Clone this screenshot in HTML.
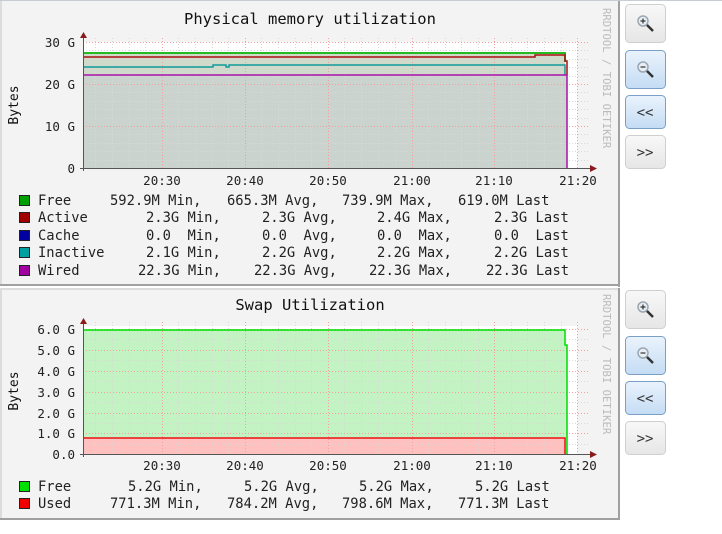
<!DOCTYPE html>
<html><head><meta charset="utf-8"><style>
html,body{margin:0;padding:0;background:#fff;width:722px;height:534px;overflow:hidden}
svg{display:block}
text{font-family:"DejaVu Sans Mono","Liberation Mono",monospace;white-space:pre}
</style></head><body>
<svg width="722" height="534" xmlns="http://www.w3.org/2000/svg">
<defs>
<linearGradient id="gb" x1="0" y1="0" x2="0" y2="1"><stop offset="0" stop-color="#f8f8f8"/><stop offset="1" stop-color="#e6e6e6"/></linearGradient>
<linearGradient id="bb" x1="0" y1="0" x2="0" y2="1"><stop offset="0" stop-color="#eaf3fc"/><stop offset="1" stop-color="#c4dcf4"/></linearGradient>
<g id="zin"><circle cx="-2" cy="-3" r="5" fill="#e8eef3" stroke="#9aa7b2" stroke-width="1.5"/><path d="M2 1 L8 7" stroke="#333" stroke-width="2.5"/><path d="M-4.5 -3 H0.5 M-2 -5.5 V-0.5" stroke="#333" stroke-width="1.2"/></g>
<g id="zout"><circle cx="-2" cy="-3" r="5" fill="#e8eef3" stroke="#9aa7b2" stroke-width="1.5"/><path d="M2 1 L8 7" stroke="#333" stroke-width="2.5"/><path d="M-4.5 -3 H0.5" stroke="#333" stroke-width="1.2"/></g>
</defs>
<rect x="0" y="0" width="722" height="1" fill="#c8ccd4"/>

<!-- PANEL 1 -->
<rect x="0" y="1" width="620" height="285" fill="#f3f3f3"/>
<rect x="0" y="1" width="2" height="285" fill="#dcdcdc"/>
<rect x="618" y="1" width="2" height="286" fill="#a0a0a0"/>
<rect x="0" y="284" width="620" height="2" fill="#a0a0a0"/>
<text x="310" y="24" font-size="15.5" text-anchor="middle" fill="#111">Physical memory utilization</text>
<text x="0" y="0" font-size="10.6" fill="#bbb" transform="translate(603,8) rotate(90)">RRDTOOL / TOBI OETIKER</text>
<text x="0" y="0" font-size="13" fill="#111" text-anchor="middle" transform="translate(18,105) rotate(-90)">Bytes</text>
<rect x="83" y="42" width="494" height="126" fill="#fff"/>
<rect x="83" y="53" width="482" height="22" fill="#cfdacb"/>
<rect x="83" y="75" width="484" height="93" fill="#cbd3cf"/>
<g stroke="#d8d8d8" stroke-dasharray="1,2" stroke-width="1">
<path d="M83 50.5H590M83 59.5H590M83 67.5H590M83 76.5H590M83 92.5H590M83 101.5H590M83 109.5H590M83 118.5H590M83 134.5H590M83 143.5H590M83 151.5H590M83 160.5H590"/>
<path d="M95.5 38V168M112.5 38V168M129.5 38V168M145.5 38V168M178.5 38V168M195.5 38V168M212.5 38V168M228.5 38V168M261.5 38V168M278.5 38V168M295.5 38V168M311.5 38V168M344.5 38V168M361.5 38V168M378.5 38V168M395.5 38V168M428.5 38V168M445.5 38V168M461.5 38V168M478.5 38V168M511.5 38V168M527.5 38V168M544.5 38V168M561.5 38V168"/>
</g>
<g stroke="#f0a0a0" stroke-dasharray="1,2" stroke-width="1">
<path d="M83 42.5H590M83 84.5H590M83 126.5H590"/>
<path d="M162.5 38V168M245.5 38V168M328.5 38V168M412.5 38V168M494.5 38V168M577.5 38V168"/>
</g>
<path d="M83 53H565V62" stroke="#22bb22" stroke-width="2" fill="none"/>
<path d="M83 57H535V55H565V61H567V75" stroke="#aa1111" stroke-width="1.5" fill="none"/>
<path d="M83 67H213V65H226V67H229V65H565V75" stroke="#119999" stroke-width="1.5" fill="none"/>
<path d="M83 75H567V168" stroke="#aa11aa" stroke-width="1.5" fill="none"/>
<path d="M83.5 38V171M80 168.5H592" stroke="#555" stroke-width="1"/>
<path d="M80 38L83.5 32L87 38Z" fill="#8b1a1a"/>
<path d="M590 165L597 168.5L590 172Z" fill="#8b1a1a"/>
<g font-size="12.5" fill="#222" text-anchor="end">
<text x="75" y="47">30 G</text><text x="75" y="89">20 G</text><text x="75" y="131">10 G</text><text x="75" y="173">0</text>
</g>
<g font-size="12.5" fill="#222" text-anchor="middle">
<text x="162" y="185">20:30</text><text x="245" y="185">20:40</text><text x="328" y="185">20:50</text><text x="412" y="185">21:00</text><text x="494" y="185">21:10</text><text x="578" y="185">21:20</text>
</g>
<g stroke="#222" stroke-width="1">
<rect x="19.5" y="195.5" width="10" height="10" fill="#00a000"/>
<rect x="19.5" y="212.5" width="10" height="10" fill="#a00000"/>
<rect x="19.5" y="230.5" width="10" height="10" fill="#0000a0"/>
<rect x="19.5" y="247.5" width="10" height="10" fill="#00a0a0"/>
<rect x="19.5" y="265.5" width="10" height="10" fill="#a000a0"/>
</g>
<g font-size="13.8" fill="#222">
<text y="205"><tspan x="38">Free</tspan><tspan x="110">592.9M Min,</tspan><tspan x="227">665.3M Avg,</tspan><tspan x="342">739.9M Max,</tspan><tspan x="458">619.0M Last</tspan></text>
<text y="222"><tspan x="38">Active</tspan><tspan x="146">2.3G Min,</tspan><tspan x="262">2.3G Avg,</tspan><tspan x="377">2.4G Max,</tspan><tspan x="494">2.3G Last</tspan></text>
<text y="240"><tspan x="38">Cache</tspan><tspan x="146">0.0  Min,</tspan><tspan x="262">0.0  Avg,</tspan><tspan x="377">0.0  Max,</tspan><tspan x="494">0.0  Last</tspan></text>
<text y="257"><tspan x="38">Inactive</tspan><tspan x="146">2.1G Min,</tspan><tspan x="262">2.2G Avg,</tspan><tspan x="377">2.2G Max,</tspan><tspan x="494">2.2G Last</tspan></text>
<text y="275"><tspan x="38">Wired</tspan><tspan x="138">22.3G Min,</tspan><tspan x="254">22.3G Avg,</tspan><tspan x="369">22.3G Max,</tspan><tspan x="486">22.3G Last</tspan></text>
</g>

<!-- PANEL 2 -->
<rect x="0" y="288" width="620" height="232" fill="#f3f3f3"/>
<rect x="0" y="288" width="620" height="2" fill="#dcdcdc"/>
<rect x="0" y="288" width="2" height="232" fill="#dcdcdc"/>
<rect x="618" y="288" width="2" height="232" fill="#a0a0a0"/>
<rect x="0" y="518" width="620" height="2" fill="#a0a0a0"/>
<text x="310" y="310" font-size="15.5" text-anchor="middle" fill="#111">Swap Utilization</text>
<text x="0" y="0" font-size="10.6" fill="#bbb" transform="translate(603,294) rotate(90)">RRDTOOL / TOBI OETIKER</text>
<text x="0" y="0" font-size="13" fill="#111" text-anchor="middle" transform="translate(18,391) rotate(-90)">Bytes</text>
<rect x="83" y="326" width="494" height="128" fill="#fff"/>
<rect x="83" y="330" width="482" height="108" fill="#c3f3c3"/>
<rect x="565" y="345" width="2" height="109" fill="#c3f3c3"/>
<rect x="83" y="438" width="482" height="16" fill="#ffc0c0"/>
<g stroke="#d8d8d8" stroke-dasharray="1,2" stroke-width="1">
<path d="M83 339.5H590M83 360.5H590M83 381.5H590M83 402.5H590M83 423.5H590M83 444.5H590"/>
<path d="M95.5 322V454M112.5 322V454M129.5 322V454M145.5 322V454M178.5 322V454M195.5 322V454M212.5 322V454M228.5 322V454M261.5 322V454M278.5 322V454M295.5 322V454M311.5 322V454M344.5 322V454M361.5 322V454M378.5 322V454M395.5 322V454M428.5 322V454M445.5 322V454M461.5 322V454M478.5 322V454M511.5 322V454M527.5 322V454M544.5 322V454M561.5 322V454"/>
</g>
<g stroke="#f0a0a0" stroke-dasharray="1,2" stroke-width="1">
<path d="M83 329.5H590M83 350.5H590M83 371.5H590M83 392.5H590M83 413.5H590M83 433.5H590"/>
<path d="M162.5 322V454M245.5 322V454M328.5 322V454M412.5 322V454M494.5 322V454M577.5 322V454"/>
</g>
<path d="M83 330H565V345H567V454" stroke="#00dd00" stroke-width="1.5" fill="none"/>
<path d="M83 438H565V454" stroke="#ee1111" stroke-width="1.5" fill="none"/>
<path d="M83.5 322V457M80 454.5H592" stroke="#555" stroke-width="1"/>
<path d="M80 324L83.5 318L87 324Z" fill="#8b1a1a"/>
<path d="M590 451L597 454.5L590 458Z" fill="#8b1a1a"/>
<g font-size="12.5" fill="#222" text-anchor="end">
<text x="75" y="334">6.0 G</text><text x="75" y="355">5.0 G</text><text x="75" y="376">4.0 G</text><text x="75" y="397">3.0 G</text><text x="75" y="418">2.0 G</text><text x="75" y="438">1.0 G</text><text x="75" y="459">0.0</text>
</g>
<g font-size="12.5" fill="#222" text-anchor="middle">
<text x="162" y="470">20:30</text><text x="245" y="470">20:40</text><text x="328" y="470">20:50</text><text x="412" y="470">21:00</text><text x="494" y="470">21:10</text><text x="578" y="470">21:20</text>
</g>
<g stroke="#222" stroke-width="1">
<rect x="19.5" y="481.5" width="10" height="10" fill="#00e000"/>
<rect x="19.5" y="498.5" width="10" height="10" fill="#f00000"/>
</g>
<g font-size="13.8" fill="#222">
<text y="491"><tspan x="38">Free</tspan><tspan x="128">5.2G Min,</tspan><tspan x="244">5.2G Avg,</tspan><tspan x="359">5.2G Max,</tspan><tspan x="475">5.2G Last</tspan></text>
<text y="508"><tspan x="38">Used</tspan><tspan x="110">771.3M Min,</tspan><tspan x="227">784.2M Avg,</tspan><tspan x="342">798.6M Max,</tspan><tspan x="458">771.3M Last</tspan></text>
</g>

<!-- BUTTONS -->
<g stroke-width="1">
<rect x="625.5" y="4.5" width="40" height="38" rx="4" fill="url(#gb)" stroke="#cfcfcf"/>
<rect x="625.5" y="50.5" width="40" height="38" rx="4" fill="url(#bb)" stroke="#7aa0c8"/>
<rect x="625.5" y="95.5" width="40" height="33" rx="4" fill="url(#bb)" stroke="#7aa0c8"/>
<rect x="625.5" y="135.5" width="40" height="33" rx="4" fill="url(#gb)" stroke="#cfcfcf"/>
<rect x="625.5" y="290.5" width="40" height="38" rx="4" fill="url(#gb)" stroke="#cfcfcf"/>
<rect x="625.5" y="336.5" width="40" height="38" rx="4" fill="url(#bb)" stroke="#7aa0c8"/>
<rect x="625.5" y="381.5" width="40" height="33" rx="4" fill="url(#bb)" stroke="#7aa0c8"/>
<rect x="625.5" y="421.5" width="40" height="33" rx="4" fill="url(#gb)" stroke="#cfcfcf"/>
</g>
<use href="#zin" x="645" y="24"/>
<use href="#zout" x="645" y="70"/>
<use href="#zin" x="645" y="310"/>
<use href="#zout" x="645" y="356"/>
<g font-size="14" fill="#333" text-anchor="middle">
<text x="645" y="117">&lt;&lt;</text><text x="645" y="157">&gt;&gt;</text>
<text x="645" y="403">&lt;&lt;</text><text x="645" y="443">&gt;&gt;</text>
</g>
</svg>
</body></html>
